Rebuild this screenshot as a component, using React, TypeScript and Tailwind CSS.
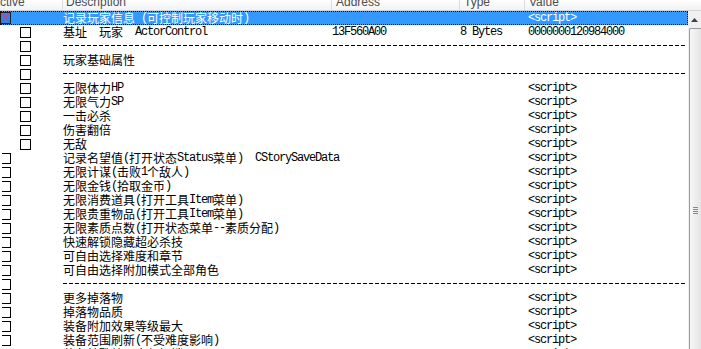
import React from "react";

const ASCII = /^[\x20-\x7e]+$/;

function Mixed({ text }: { text: string }) {
  const parts = text.split(/([\x20-\x7e]+)/).filter(Boolean);
  return (
    <>
      {parts.map((p, i) =>
        ASCII.test(p) ? (
          <span
            key={i}
            className="font-['Liberation_Mono',monospace] text-[12px] tracking-[-1.2px] whitespace-pre leading-[14px]"
          >
            {p}
          </span>
        ) : (
          <span
            key={i}
            className="font-['Noto_Sans_CJK_SC',sans-serif] text-[12px] leading-[14px]"
          >
            {p}
          </span>
        )
      )}
    </>
  );
}

type Row = {
  d?: string;
  addr?: string;
  type?: string;
  val?: string;
  dash?: boolean;
  indent?: boolean;
  selected?: boolean;
};

const rows: Row[] = [
  { d: "记录玩家信息 (可控制玩家移动时)", val: "<script>", selected: true },
  { d: "基址  玩家  ActorControl", addr: "13F560A00", type: "8 Bytes", val: "0000000120984000", indent: true },
  { dash: true, indent: true },
  { d: "玩家基础属性", indent: true },
  { dash: true, indent: true },
  { d: "无限体力HP", val: "<script>", indent: true },
  { d: "无限气力SP", val: "<script>", indent: true },
  { d: "一击必杀", val: "<script>", indent: true },
  { d: "伤害翻倍", val: "<script>", indent: true },
  { d: "无敌", val: "<script>", indent: true },
  { d: "记录名望值(打开状态Status菜单)  CStorySaveData", val: "<script>" },
  { d: "无限计谋(击败1个敌人)", val: "<script>" },
  { d: "无限金钱(拾取金币)", val: "<script>" },
  { d: "无限消费道具(打开工具Item菜单)", val: "<script>" },
  { d: "无限贵重物品(打开工具Item菜单)", val: "<script>" },
  { d: "无限素质点数(打开状态菜单--素质分配)", val: "<script>" },
  { d: "快速解锁隐藏超必杀技", val: "<script>" },
  { d: "可自由选择难度和章节", val: "<script>" },
  { d: "可自由选择附加模式全部角色", val: "<script>" },
  { dash: true },
  { d: "更多掉落物", val: "<script>" },
  { d: "掉落物品质", val: "<script>" },
  { d: "装备附加效果等级最大", val: "<script>" },
  { d: "装备范围刷新(不受难度影响)", val: "<script>" },
  { d: "装备特殊效果全部解锁", val: "<script>" },
];

function Check({ row }: { row: Row }) {
  if (row.selected) {
    return (
      <svg width="11" height="12" viewBox="0 0 11 12" className="mt-[1px]">
        <rect x="0.5" y="0.5" width="10" height="11" fill="#3d7fe0" stroke="#1a1f3a" />
        <path d="M1.5 1.5 L9.5 10.5 M9.5 1.5 L1.5 10.5" stroke="#c8407a" strokeWidth="1" />
      </svg>
    );
  }
  if (row.indent) {
    return <div className="ml-[20px] mt-[2px] w-[11px] h-[11px] border border-black bg-white" />;
  }
  return <div className="ml-[2px] mt-[2px] w-[9px] h-[11px] border-t border-r border-b border-black bg-white" />;
}

function TableRow({ row }: { row: Row }) {
  const sel = row.selected;
  return (
    <div
      className={
        "relative flex h-[14px] whitespace-nowrap overflow-hidden " +
        (sel ? "bg-[#3399ff] text-white" : "text-black")
      }
    >
      {sel && (
        <div className="absolute inset-0 border border-dotted border-[#111] pointer-events-none" />
      )}
      <div className="w-[63px] shrink-0 flex items-start">
        <Check row={row} />
      </div>
      {row.dash ? (
        <div className="flex-1 mr-[1px] pt-[6px]">
          <div className="h-px bg-[repeating-linear-gradient(90deg,#000_0_4px,transparent_4px_6px)]" />
        </div>
      ) : (
        <>
          <div className="w-[269px] shrink-0 flex items-center h-[14px]">
            <Mixed text={row.d ?? ""} />
          </div>
          <div className="w-[128px] shrink-0 flex items-center h-[14px]">
            {row.addr && <Mixed text={row.addr} />}
          </div>
          <div className="w-[68px] shrink-0 flex items-center h-[14px]">
            {row.type && <Mixed text={row.type} />}
          </div>
          <div className="flex-1 flex items-center h-[14px]">
            {row.val && <Mixed text={row.val} />}
          </div>
        </>
      )}
    </div>
  );
}

export default function App() {
  return (
    <div className="w-[701px] h-[349px] bg-white overflow-hidden flex flex-col">
      {/* header */}
      <div className="h-[11px] shrink-0 flex bg-[linear-gradient(#ffffff,#f1f2f4)] border-b border-[#d5d5d5] text-[#4d4d4d] font-['Liberation_Sans',sans-serif] text-[12px] leading-[12px] overflow-hidden">
        <div className="w-[63px] shrink-0 border-r border-[#dcdcdc] -mt-[4px] overflow-hidden">
          <span className="-ml-[8px] inline-block">Active</span>
        </div>
        <div className="w-[269px] shrink-0 border-r border-[#dcdcdc] -mt-[4px] pl-[3px]">Description</div>
        <div className="w-[128px] shrink-0 border-r border-[#dcdcdc] -mt-[4px] pl-[4px]">Address</div>
        <div className="w-[65px] shrink-0 border-r border-[#dcdcdc] -mt-[4px] pl-[4px]">Type</div>
        <div className="flex-1 -mt-[4px] pl-[4px]">Value</div>
      </div>
      {/* body */}
      <div className="flex flex-1 min-h-0">
        <div className="w-[688px] shrink-0 overflow-hidden">
          {rows.map((r, i) => (
            <TableRow key={i} row={r} />
          ))}
        </div>
        <div className="w-[13px] shrink-0 bg-[#f0f0f0] flex flex-col">
          <div className="h-[17px] shrink-0 flex items-center justify-end pr-[3px]">
            <svg width="7" height="4" viewBox="0 0 7 4">
              <path d="M0 4 L3.5 0 L7 4 Z" fill="#404040" />
            </svg>
          </div>
          <div className="flex-1 ml-[1px] border-l border-t border-[#9a9a9a] rounded-tl-[2px] bg-[linear-gradient(90deg,#f7f7f7,#e4e4e4)] flex flex-col">
            <div className="h-[178px] shrink-0" />
            <div className="ml-[3px] flex flex-col gap-[1px]">
              <div className="w-[5px] h-px bg-[#8a8a8a]" />
              <div className="w-[5px] h-px bg-[#8a8a8a]" />
              <div className="w-[5px] h-px bg-[#8a8a8a]" />
              <div className="w-[5px] h-px bg-[#8a8a8a]" />
            </div>
          </div>
        </div>
      </div>
    </div>
  );
}
